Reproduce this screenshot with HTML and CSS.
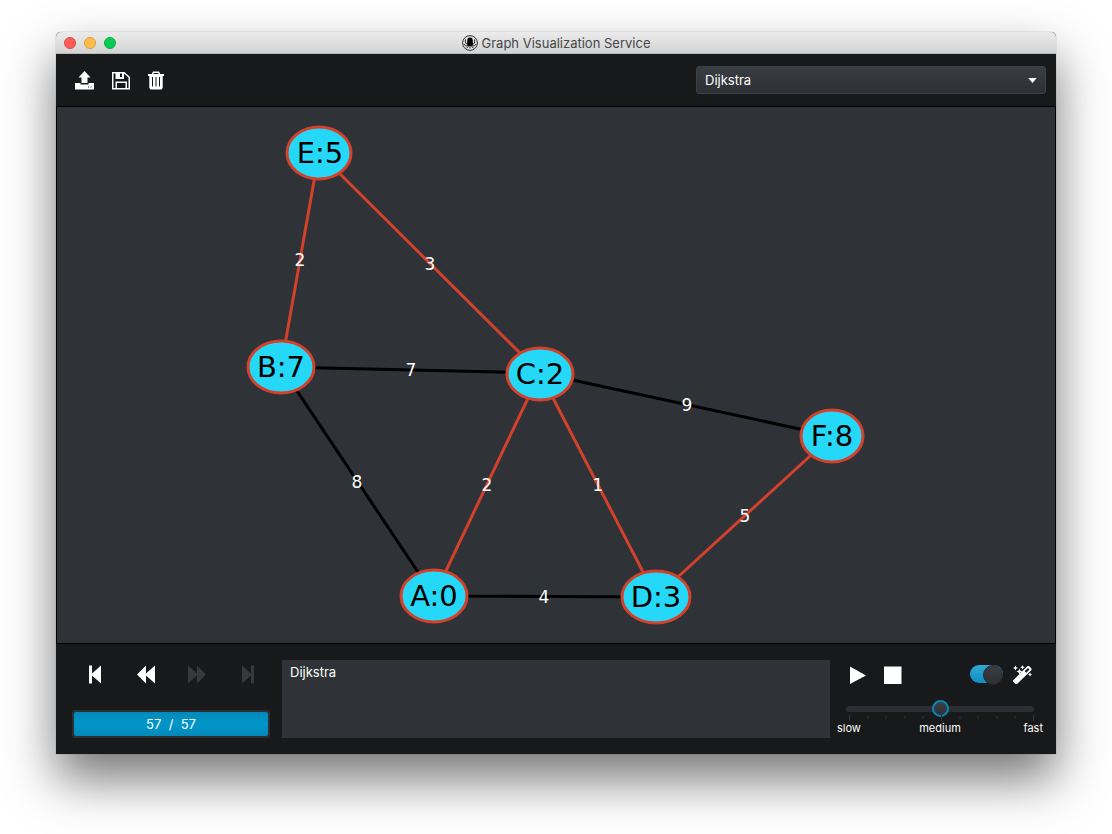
FILE: index.html
```html
<!DOCTYPE html>
<html lang="en">
<head>
<meta charset="utf-8">
<title>Graph Visualization Service</title>
<link rel="stylesheet" href="styles.css">
</head>
<body>
<main class="window">
  <header class="titlebar">
    <div class="lights">
      <button class="light light-close" aria-label="Close"></button>
      <button class="light light-min" aria-label="Minimize"></button>
      <button class="light light-max" aria-label="Zoom"></button>
    </div>
    <h1 class="title">
      <svg class="logo" viewBox="0 0 16 16" aria-hidden="true">
        <circle cx="8" cy="8" r="7.4" fill="#e0e0e0" stroke="#333" stroke-width="1"/>
        <path d="M8 2.500C6.200 2.500 5.300 3.700 5.300 5.200L5 9.500 6.200 11h3.600L11 9.500l-.3-4.300c0-1.500-.9-2.700-2.700-2.700z" fill="#000"/>
        <path d="M5.500 9C3.500 9 3 7.500 3.500 4.500M10.500 9c2 0 2.500-1.500 2-4.500M6 10.500c-2 1-3.500 0-4-1.500M10 10.500c2 1 3.500 0 4-1.500M6.500 10.500C6 12.500 5 13 4.500 13M9.500 10.500c.5 2 1.500 2.500 2 2.500M8 10.500v3" fill="none" stroke="#222" stroke-width="1"/>
      </svg>
      <span>Graph Visualization Service</span>
    </h1>
  </header>

  <div class="toolbar">
    <div class="tools">
      <button class="icon-button" aria-label="Open">
        <svg viewBox="0 0 20 20"><path d="M10.500 1l6 6.500h-3V13h-6V7.500h-3z"/><path fill-rule="evenodd" d="M1 13h5.500v1.500h8V13H20v6.500H1zM14 16.500v1h1v-1zm2.500 0v1h1v-1z"/></svg>
      </button>
      <button class="icon-button" aria-label="Save">
        <svg viewBox="0 0 20 20"><path fill-rule="evenodd" d="M2 2h12.500L20 7v12.500H2zM3.500 3.500V18h2v-6.500H17V18h1.500V7.500L14 3.500V9H5.500V3.500zM10 3.500V7h2V3.500zM7 13v5h8.500v-5z"/></svg>
      </button>
      <button class="icon-button" aria-label="Delete">
        <svg viewBox="0 0 20 20"><path fill-rule="evenodd" d="M7 1.500h6L14.300 4H18v2h-1.300v12l-1.400 1.500H4.700L3.300 18V6H2V4h3.700zM7.900 2.900L7.300 4h5.400l-.6-1.100zM6 7v9.500h1V7zm3.500 0v9.500h1V7zm3.500 0v9.500h1V7z"/></svg>
      </button>
    </div>
    <div class="picker">
      <select class="algorithm" aria-label="Algorithm">
        <option selected>Dijkstra</option>
      </select>
      <svg class="picker-arrow" viewBox="0 0 10 6" aria-hidden="true"><path d="M0 0h10L5 6z"/></svg>
    </div>
  </div>

  <section class="canvas" aria-label="Graph">
    <svg class="graph" viewBox="57 107 998 536">
      <g class="edges">
        <path class="edge" d="M281 367L540 373M281 367L434 596M434 596L656 597M540 373L832 436"/>
        <path class="edge edge-active" d="M319 153L281 367M319 153L540 373M540 373L434 596M540 373L656 597M832 436L656 597"/>
      </g>
      <g class="weights">
        <text x="300" y="266">2</text>
        <text x="430" y="270">3</text>
        <text x="411" y="376">7</text>
        <text x="357" y="488">8</text>
        <text x="487" y="491">2</text>
        <text x="598" y="491">1</text>
        <text x="687" y="411">9</text>
        <text x="745" y="522">5</text>
        <text x="544" y="603">4</text>
      </g>
      <g class="nodes">
        <ellipse cx="319" cy="153" rx="32" ry="26"/><text x="320" y="163">E:5</text>
        <ellipse cx="281" cy="367" rx="33" ry="26"/><text x="281" y="377">B:7</text>
        <ellipse cx="540" cy="374" rx="33" ry="26"/><text x="540" y="384">C:2</text>
        <ellipse cx="832" cy="436" rx="31" ry="26"/><text x="832" y="446">F:8</text>
        <ellipse cx="434" cy="596" rx="33" ry="26"/><text x="434" y="606">A:0</text>
        <ellipse cx="656" cy="597" rx="34" ry="26"/><text x="656" y="607">D:3</text>
      </g>
    </svg>
  </section>

  <footer class="controls">
    <div class="steps">
      <div class="step-buttons">
        <button class="step" aria-label="First step"><svg viewBox="0 0 20 20"><path d="M4 1.500h3v8l9-8v18l-9-8v8H4z"/></svg></button>
        <button class="step" aria-label="Step back"><svg viewBox="0 0 20 20"><path d="M1 10.500l9-9v8l9-8v18l-9-8v8z"/></svg></button>
        <button class="step" aria-label="Step forward" disabled><svg viewBox="0 0 20 20"><path d="M20 10.500l-9-9v8l-9-8v18l9-8v8z"/></svg></button>
        <button class="step" aria-label="Last step" disabled><svg viewBox="0 0 20 20"><path d="M17 1.500h-3v8l-9-8v18l9-8v8h3z"/></svg></button>
      </div>
      <div class="progress" role="progressbar" aria-label="Step" aria-valuenow="57" aria-valuemin="0" aria-valuemax="57">
        <div class="progress-fill">57&nbsp; /&nbsp; 57</div>
      </div>
    </div>

    <textarea class="log" aria-label="Log" readonly>Dijkstra</textarea>

    <div class="playback">
      <div class="play-row">
        <button class="icon-button" aria-label="Play"><svg viewBox="0 0 20 20"><path d="M3 2.500l16 9L3 20z"/></svg></button>
        <button class="icon-button" aria-label="Stop"><svg viewBox="0 0 20 20"><path d="M1 2.500h17.500V20H1z"/></svg></button>
        <input class="toggle" type="checkbox" role="switch" aria-label="Automatic layout" checked>
        <button class="icon-button" aria-label="Apply layout"><svg viewBox="0 0 20 20"><path fill-rule="evenodd" d="M1 16.500L15.500 2H17l2.500 2.500V6L5 20H3.500L1 17.500zM12.700 7.200l1.600 1.600 3.200-3.300L16 4z"/><path d="M3.500 1.500l.8 1.700 1.700.8-1.700.8-.8 1.700-.8-1.700L1 4l1.700-.8zM10.500 1l.7 1.500 1.500.7-1.500.7-.7 1.500-.7-1.500-1.500-.7 1.500-.7zM7.500 4.500l.9 2.100 2.100.9-2.100.9-.9 2.100-.9-2.100-2.100-.9 2.100-.9zM18 8.500l.7 1.300 1.300.7-1.300.7L18 12.500l-.7-1.300-1.300-.7 1.300-.7z"/></svg></button>
      </div>
      <div class="speed">
        <input class="slider" type="range" min="0" max="10" value="5" aria-label="Speed">
        <svg class="ticks" viewBox="0 0 188 6" preserveAspectRatio="none" aria-hidden="true">
          <path class="tick-major" d="M3.500 0v6M95.500 0v6M187.500 0v6"/>
          <path class="tick-minor" d="M22 1v3M40 1v3M59 1v3M77 1v3M114 1v3M132 1v3M151 1v3M169 1v3"/>
        </svg>
        <div class="speed-labels"><span>slow</span><span>medium</span><span>fast</span></div>
      </div>
    </div>
  </footer>
</main>
</body>
</html>
```
FILE: styles.css
```css
* { box-sizing: border-box; }

body {
  margin: 0;
  min-height: 100vh;
  padding: 32px 56px 80px;
  display: flex;
  background: #fff;
  font-family: Inter, Roboto, sans-serif;
  font-size: 13px;
  color: #fff;
}

button {
  padding: 0;
  border: 0;
  background: none;
  color: inherit;
}

svg { display: block; }

.window {
  flex: 1;
  min-width: 0;
  display: flex;
  flex-direction: column;
  background: #17191a;
  border-radius: 5px 5px 0 0;
  box-shadow: 0 0 1px rgba(0, 0, 0, 0.5), 0 25px 50px rgba(0, 0, 0, 0.54);
}

.titlebar {
  display: grid;
  grid-template-columns: 1fr auto 1fr;
  align-items: center;
  height: 22px;
  padding: 0 8px;
  border-radius: 5px 5px 0 0;
  border-bottom: 1px solid #b8bcba;
  background: linear-gradient(#ebebeb, #d3d3d3);
}

.lights { display: flex; gap: 8px; }

.light {
  width: 12px;
  height: 12px;
  border-radius: 50%;
  border: 1px solid;
}

.light-close { background: #fc5b57; border-color: #df4744; }
.light-min { background: #fdbc4b; border-color: #dd9d3c; }
.light-max { background: #04cb53; border-color: #09ad46; }

.title {
  display: flex;
  align-items: center;
  gap: 4px;
  margin: 0;
  font-size: 13px;
  font-weight: 400;
  line-height: 20px;
  color: #474747;
}

.logo { width: 16px; height: 16px; }

.toolbar {
  display: flex;
  align-items: center;
  justify-content: space-between;
  height: 52px;
  padding: 0 10px 0 18px;
}

.tools { display: flex; gap: 16px; }

.icon-button, .icon-button svg {
  width: 20px;
  height: 20px;
  fill: #fff;
}

.picker { position: relative; }

.algorithm {
  appearance: none;
  display: block;
  width: 350px;
  height: 28px;
  padding: 0 8px;
  border: 1px solid #3c4146;
  border-radius: 3px;
  background: linear-gradient(#393e43, #2c2f34);
  color: #fff;
  font: inherit;
}

.picker-arrow {
  position: absolute;
  top: 12px;
  right: 9px;
  width: 9px;
  height: 5px;
  fill: #fff;
  pointer-events: none;
}

.canvas {
  flex: 1;
  min-height: 0;
  border: 1px solid #000;
  background: #2f3237;
}

.graph { width: 100%; height: 100%; }

.edge { stroke: #000; stroke-width: 3; fill: none; }
.edge-active { stroke: #d1412b; }

.weights text, .nodes text {
  font-family: "DejaVu Sans", sans-serif;
  text-anchor: middle;
}

.weights text { font-size: 17px; fill: #fff; }
.nodes text { font-size: 29px; fill: #000; }
.nodes ellipse { fill: #26d8f7; stroke: #d1412b; stroke-width: 3; }

.controls {
  display: grid;
  grid-template-columns: 198px 1fr 208px;
  height: 110px;
  padding: 16px 12px 16px 16px;
}

.steps {
  display: flex;
  flex-direction: column;
  justify-content: space-between;
}

.step-buttons { display: flex; justify-content: space-between; padding-top: 4px; }

.step {
  display: flex;
  justify-content: center;
  width: 46px;
  height: 20px;
}

.step svg { width: 20px; height: 20px; fill: #fff; }
.step:disabled svg { fill: #38393b; }

.progress {
  height: 28px;
  padding: 2px;
  border-radius: 3px;
  background: #2b2e33;
}

.progress-fill {
  height: 24px;
  border-radius: 2px;
  background: linear-gradient(#0289b8, #0296cb 50%, #0289b8);
  line-height: 24px;
  text-align: center;
}

.log {
  margin: 0 6px 0 12px;
  padding: 3px 8px;
  border: 0;
  resize: none;
  background: #2f3237;
  color: #fff;
  font: inherit;
  line-height: 18px;
}

.playback { display: flex; flex-direction: column; }

.play-row {
  display: flex;
  align-items: center;
  gap: 16px;
  padding: 4px 12px 0 11px;
}

.toggle {
  appearance: none;
  display: flex;
  justify-content: flex-end;
  width: 33px;
  height: 18px;
  margin: 0 -7px 0 auto;
  border-radius: 9px;
  background: linear-gradient(#34a7d2, #0c90c4);
}

.toggle::before {
  content: "";
  width: 18px;
  height: 18px;
  border: 1px solid #24272a;
  border-radius: 50%;
  background: linear-gradient(#3a3e43, #2d3035);
}

.speed { padding-top: 16px; }

.slider {
  appearance: none;
  display: block;
  width: 188px;
  height: 18px;
  margin: 0 auto;
  background: none;
}

.slider::-webkit-slider-runnable-track {
  height: 6px;
  border-radius: 3px;
  background: #2b2e33;
}

.slider::-webkit-slider-thumb {
  appearance: none;
  width: 17px;
  height: 17px;
  margin-top: -6px;
  border: 2px solid #0b86b5;
  border-radius: 50%;
  background: linear-gradient(#3a3e43, #2d3035);
}

.ticks { width: 188px; height: 6px; margin: -3px auto 0; }
.tick-major, .tick-minor { stroke: #303338; stroke-width: 1; }

.speed-labels {
  display: grid;
  grid-template-columns: 1fr auto 1fr;
  padding: 0 1px;
  font-size: 11px;
  line-height: 14px;
}

.speed-labels span:last-child { text-align: right; }
```
